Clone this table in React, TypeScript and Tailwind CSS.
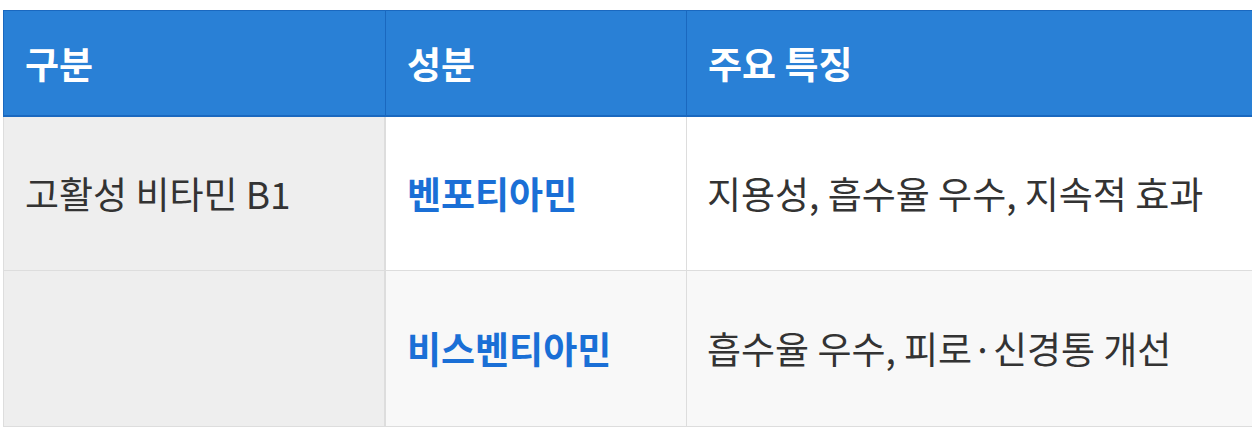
import React from "react";

const font = { fontFamily: '"Noto Sans CJK KR", "Noto Sans", sans-serif' };

export default function App() {
  return (
    <div className="bg-white w-[1252px] h-[430px] overflow-hidden pt-[10px] pl-[3px]" style={font}>
      <div className="w-[1300px] grid grid-cols-[383px_301px_1fr] text-[37px] leading-none">
        {/* header */}
        <div className="h-[107px] bg-[#2980d6] border-t border-b-2 border-l border-r border-[#1a68bf] flex items-center pl-[21px] text-white font-bold">
          구분
        </div>
        <div className="h-[107px] bg-[#2980d6] border-t border-b-2 border-r border-[#1a68bf] flex items-center pl-[21px] text-white font-bold">
          성분
        </div>
        <div className="h-[107px] bg-[#2980d6] border-t border-b-2 border-[#1a68bf] flex items-center pl-[21px] text-white font-bold">
          주요 특징
        </div>

        {/* row 1 */}
        <div className="h-[154px] bg-[#eeeeee] border-l border-b border-r-2 border-[#dddddd] flex items-center pl-[21px] text-[#333333]">
          고활성 비타민 B1
        </div>
        <div className="h-[154px] bg-white border-b border-r border-[#dddddd] flex items-center pl-[21px] text-[#1a6fd6] font-bold">
          벤포티아민
        </div>
        <div className="h-[154px] bg-white border-b border-[#dddddd] flex items-center pl-[20px] text-[#333333]">
          지용성, 흡수율 우수, 지속적 효과
        </div>

        {/* row 2 */}
        <div className="h-[156px] bg-[#eeeeee] border-l border-b border-r-2 border-[#dddddd]" />
        <div className="h-[156px] bg-[#f8f8f8] border-b border-r border-[#dddddd] flex items-center pl-[21px] text-[#1a6fd6] font-bold">
          비스벤티아민
        </div>
        <div className="h-[156px] bg-[#f8f8f8] border-b border-[#dddddd] flex items-center pl-[20px] text-[#333333]">
          흡수율 우수, 피로·신경통 개선
        </div>
      </div>
    </div>
  );
}
